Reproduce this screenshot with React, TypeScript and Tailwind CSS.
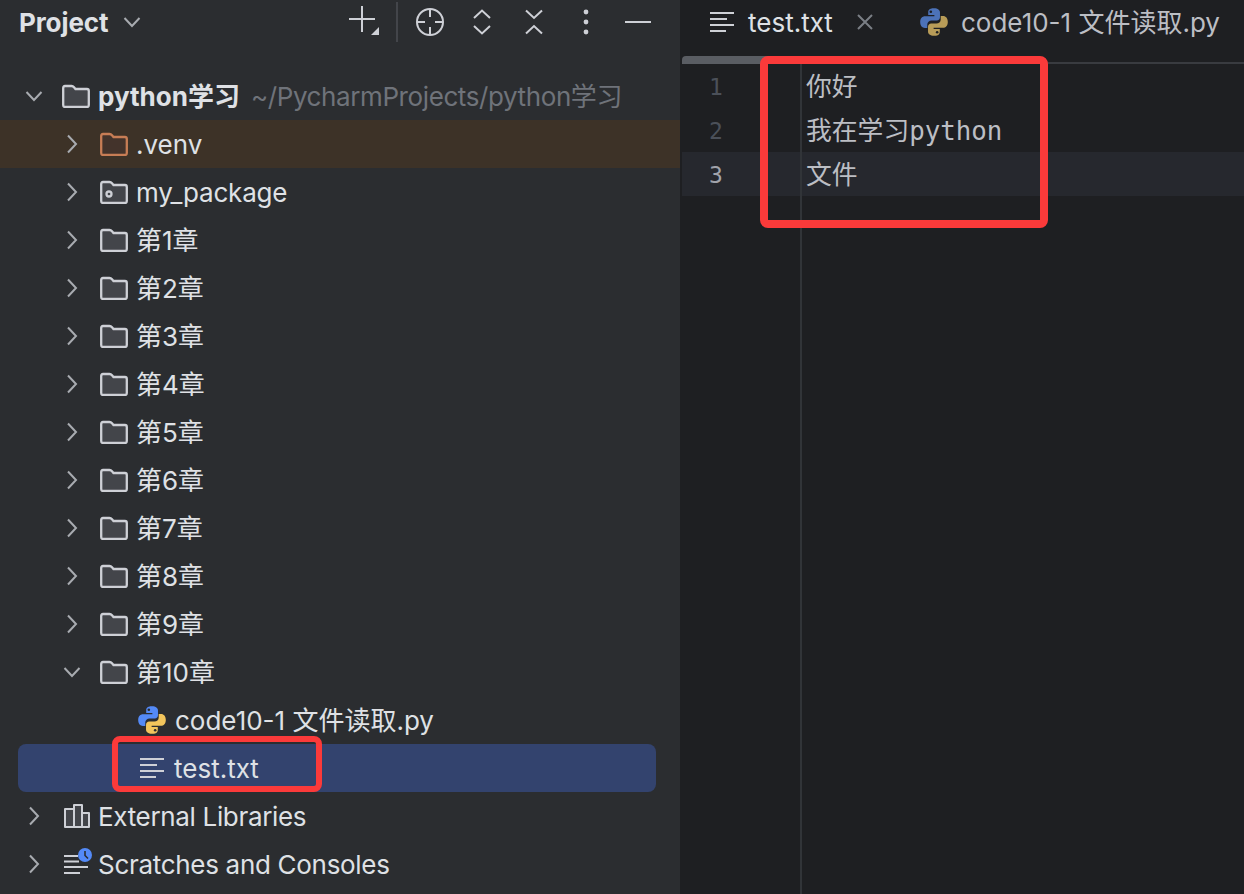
import type { ReactNode } from 'react'

const uiFont = "font-['Inter','Noto_Sans_CJK_SC',sans-serif]"
const stroke = '#ced0d6'

function ChevronRight() {
  return (
    <svg width="14" height="20" viewBox="0 0 14 20" fill="none" stroke="#a8abb0" strokeWidth="2">
      <path d="M3 1.5 L11 10 L3 18.5" />
    </svg>
  )
}

function ChevronDown() {
  return (
    <svg width="18" height="12" viewBox="0 0 18 12" fill="none" stroke="#a8abb0" strokeWidth="2">
      <path d="M1.5 2 L9 10 L16.5 2" />
    </svg>
  )
}

function Folder({ color = stroke, fill = '#43454a', dot = false }: { color?: string; fill?: string; dot?: boolean }) {
  return (
    <svg width="28" height="24" viewBox="0 0 28 24" fill={fill} stroke={color} strokeWidth="2.3">
      <path d="M1.2 4 Q1.2 2 3 2 H9.5 Q11 2 12 3.2 L13.5 5 H25 Q26.8 5 26.8 7 V21 Q26.8 23 25 23 H3 Q1.2 23 1.2 21 Z" />
      {dot && <circle cx="9" cy="14" r="2.5" fill="none" />}
    </svg>
  )
}

function PythonIcon({ blue, yellow, eye = '#2b2d30' }: { blue: string; yellow: string; eye?: string }) {
  const d =
    'M8 .6C5.2.6 4.9 1.9 4.9 2.8V4.3H8.2V4.9H3.2C1.7 4.9.6 6 .6 8S1.7 11.2 3.1 11.2H4.4V9.4C4.4 8.1 5.4 7.2 6.7 7.2H9.5C10.5 7.2 11.2 6.5 11.2 5.5V2.8C11.2 1.7 10.1.6 8 .6Z'
  return (
    <svg width="28" height="28" viewBox="0.5 0.5 15 15">
      <path d={d} fill={blue} />
      <path d={d} fill={yellow} transform="rotate(180 8 8)" />
      <circle cx="6.3" cy="2.5" r=".7" fill={eye} />
      <circle cx="9.7" cy="13.5" r=".7" fill={eye} />
    </svg>
  )
}

function TextIcon({ color = stroke }: { color?: string }) {
  return (
    <svg width="24" height="20" viewBox="0 0 24 20" fill="none" stroke={color} strokeWidth="1.8">
      <path d="M0 1 H24 M0 7 H17 M0 13 H24 M0 19 H16" />
    </svg>
  )
}

function LibraryIcon() {
  return (
    <svg width="28" height="24" viewBox="0 0 28 24" fill="#43454a" stroke={stroke} strokeWidth="2">
      <path d="M3 5 H12 V23 H3 Z M12 1 H20 V23 H12 Z M20 9 H27 V23 H20 Z" strokeLinejoin="round" />
    </svg>
  )
}

function ScratchIcon() {
  return (
    <svg width="32" height="32" viewBox="0 0 32 32" fill="none">
      <path d="M2 8 H16 M2 13.5 H17 M2 19 H26 M2 25 H18" stroke={stroke} strokeWidth="1.8" />
      <circle cx="23" cy="7" r="7" fill="#548af7" />
      <path d="M23 3 V7.5 L26 10.5" stroke="#2b2d30" strokeWidth="1.6" />
    </svg>
  )
}

function ToolbarIcons() {
  return (
    <div className="ml-auto flex items-center text-[#ced0d6]">
      <svg width="32" height="32" viewBox="0 0 32 32" stroke={stroke} strokeWidth="2">
        <path d="M0 13 H26 M13 0 V26" fill="none" />
        <path d="M30 21 V29 H22 Z" fill={stroke} stroke="none" />
      </svg>
      <div className="ml-[15px] h-[40px] w-[2px] bg-[#43454a]" />
      <svg className="ml-[17px]" width="30" height="30" viewBox="0 0 30 30" fill="none" stroke={stroke} strokeWidth="2">
        <circle cx="15" cy="15" r="13" />
        <path d="M15 2 V10 M15 20 V28 M2 15 H10 M20 15 H28" />
      </svg>
      <svg className="ml-[28px]" width="18" height="26" viewBox="0 0 18 26" fill="none" stroke={stroke} strokeWidth="2">
        <path d="M1 9 L9 1.5 L17 9 M1 17 L9 24.5 L17 17" />
      </svg>
      <svg className="ml-[34px]" width="18" height="26" viewBox="0 0 18 26" fill="none" stroke={stroke} strokeWidth="2">
        <path d="M1 1.5 L9 9 L17 1.5 M1 24.5 L9 17 L17 24.5" />
      </svg>
      <svg className="ml-[40px]" width="6" height="26" viewBox="0 0 6 26" fill={stroke}>
        <circle cx="3" cy="3" r="2.4" />
        <circle cx="3" cy="13" r="2.4" />
        <circle cx="3" cy="23" r="2.4" />
      </svg>
      <div className="ml-[36px] mr-[29px] h-[2px] w-[26px] bg-[#ced0d6]" />
    </div>
  )
}

type RowProps = {
  pad: string
  chevron?: 'right' | 'down'
  icon: ReactNode
  className?: string
  children: ReactNode
}

function TreeRow({ pad, chevron, icon, className = '', children }: RowProps) {
  return (
    <div className={`flex h-[48px] items-center ${pad} ${className}`}>
      <div className="flex w-[38px] shrink-0 items-center justify-center">
        {chevron === 'right' && <ChevronRight />}
        {chevron === 'down' && <ChevronDown />}
      </div>
      <div className="ml-[9px] flex w-[36px] shrink-0 items-center">{icon}</div>
      <div className="whitespace-nowrap">{children}</div>
    </div>
  )
}

const chapters = ['第1章', '第2章', '第3章', '第4章', '第5章', '第6章', '第7章', '第8章', '第9章']

function Sidebar() {
  return (
    <aside className={`flex h-full w-[680px] shrink-0 flex-col bg-[#2b2d30] text-[26px] text-[#dfe1e5] ${uiFont}`}>
      <header className="flex h-[44px] shrink-0 items-center pl-[19px]">
        <span className="font-bold tracking-[-0.1px]">Project</span>
        <span className="ml-[15px]">
          <ChevronDown />
        </span>
        <ToolbarIcons />
      </header>
      <div className="pt-[28px]">
        <TreeRow pad="pl-[15px]" chevron="down" icon={<Folder />}>
          <span className="font-bold">python学习</span>
          <span className="ml-[11px] tracking-[-0.4px] text-[#6f737a]">~/PycharmProjects/python学习</span>
        </TreeRow>
        <TreeRow pad="pl-[53px]" chevron="right" className="bg-[#3d3227]" icon={<Folder color="#c77d55" fill="#43332b" />}>
          .venv
        </TreeRow>
        <TreeRow pad="pl-[53px]" chevron="right" icon={<Folder dot />}>
          <span className="tracking-[-0.2px]">my_package</span>
        </TreeRow>
        {chapters.map(name => (
          <TreeRow key={name} pad="pl-[53px]" chevron="right" icon={<Folder />}>
            {name}
          </TreeRow>
        ))}
        <TreeRow pad="pl-[53px]" chevron="down" icon={<Folder />}>
          第10章
        </TreeRow>
        <TreeRow
          pad="pl-[92px]"
          icon={
            <span className="-ml-[1px]">
              <PythonIcon blue="#548af7" yellow="#f2c55c" />
            </span>
          }
        >
          code10-1 文件读取.py
        </TreeRow>
        <TreeRow
          pad="pl-[73px]"
          className="ml-[18px] w-[638px] rounded-lg bg-[#33436e]"
          icon={
            <span className="ml-[2px]">
              <TextIcon />
            </span>
          }
        >
          test.txt
        </TreeRow>
        <TreeRow pad="pl-[15px]" chevron="right" icon={<LibraryIcon />}>
          <span className="tracking-[-0.33px]">External Libraries</span>
        </TreeRow>
        <TreeRow pad="pl-[15px]" chevron="right" icon={<ScratchIcon />}>
          <span className="tracking-[-0.3px]">Scratches and Consoles</span>
        </TreeRow>
      </div>
    </aside>
  )
}

const codeLines = ['你好', '我在学习python', '文件']

function Editor() {
  return (
    <main className="flex h-full min-w-0 flex-1 flex-col bg-[#1e1f22] pl-[2px]">
      <div className={`flex h-[64px] shrink-0 border-b-2 border-[#393b40] text-[26px] ${uiFont}`}>
        <div className="flex h-[64px] w-[214px] shrink-0 flex-col">
          <div className="flex h-[44px] items-center pl-[28px] text-[#dfe1e5]">
            <TextIcon />
            <span className="ml-[14px]">test.txt</span>
            <svg className="ml-[24px]" width="16" height="16" viewBox="0 0 16 16" stroke="#7a7e85" strokeWidth="2">
              <path d="M1 1 L15 15 M15 1 L1 15" />
            </svg>
          </div>
          <div className="mt-auto h-[8px] rounded-t-sm bg-[#5a5d63]" />
        </div>
        <div className="flex h-[44px] items-center pl-[24px] text-[#bcbec4]">
          <PythonIcon blue="#4c72b8" yellow="#b89c58" eye="#1e1f22" />
          <span className="ml-[13px] whitespace-nowrap">code10-1 文件读取.py</span>
        </div>
      </div>
      <div className="flex flex-1 flex-col font-['DejaVu_Sans_Mono','Noto_Sans_CJK_SC',monospace] text-[25.8px]">
        {codeLines.map((line, i) => (
          <div key={line} className={`flex h-[44px] ${i === 2 ? 'bg-[#26282e]' : ''}`}>
            <div
              className={`w-[120px] shrink-0 border-r-2 border-[#313438] pl-[27px] text-[23px] leading-[47px] ${
                i === 2 ? 'text-[#a1a3ab]' : 'text-[#4b5059]'
              }`}
            >
              {i + 1}
            </div>
            <div className="pl-[4px] leading-[47px] text-[#bcbec4]">{line}</div>
          </div>
        ))}
        <div className="w-[120px] flex-1 border-r-2 border-[#313438]" />
      </div>
    </main>
  )
}

export default function App() {
  return (
    <div className="relative flex h-[894px] w-[1244px] overflow-hidden bg-[#1e1f22]">
      <Sidebar />
      <Editor />
      {/* red annotation boxes drawn over the screenshot */}
      <div className="absolute left-[112px] top-[736px] h-[56px] w-[210px] rounded-lg border-[6px] border-[#fb3a3a]" />
      <div className="absolute left-[760px] top-[56px] h-[172px] w-[288px] rounded-lg border-[8px] border-[#fb3a3a]" />
    </div>
  )
}
